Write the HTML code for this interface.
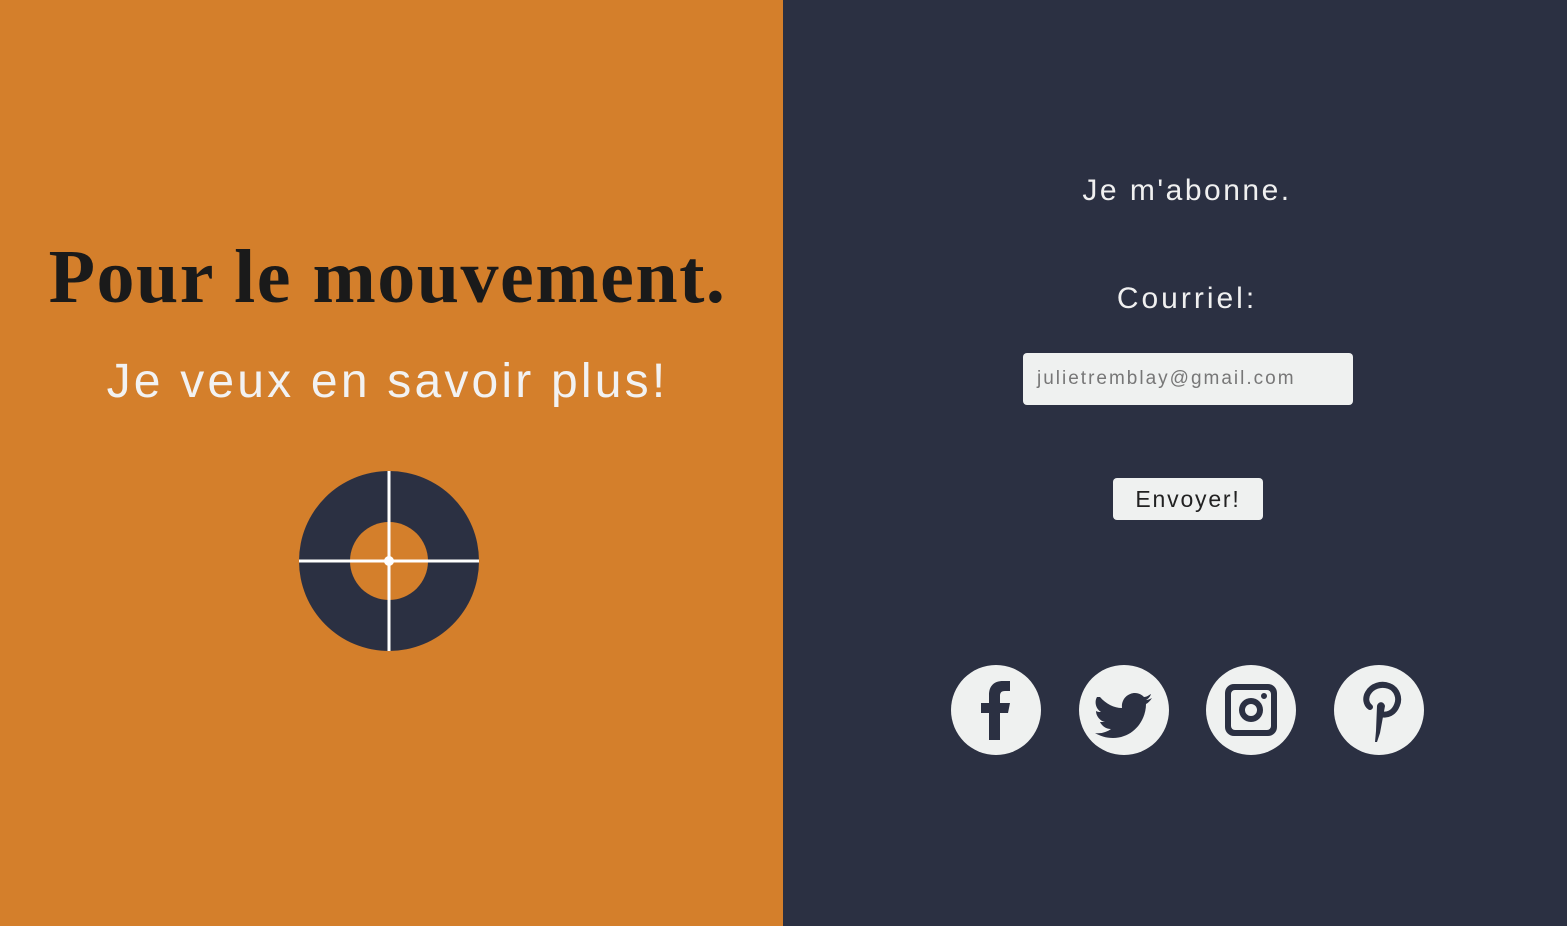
<!DOCTYPE html>
<html><head><style>
body{margin:0;width:1567px;height:926px;overflow:hidden;font-family:"Liberation Sans",sans-serif;}
.l{position:absolute;left:0;top:0;width:783px;height:926px;background:#d47f2b;}
.r{position:absolute;left:783px;top:0;width:784px;height:926px;background:#2b3042;color:#f0f0f0;}
.t{position:absolute;left:0;width:783px;text-align:center;}
.rt{position:absolute;left:12px;width:784px;text-align:center;}
</style></head><body>
<div class="l">
<div class="t" style="top:234px;left:-4px;font-family:'Liberation Serif',serif;font-weight:bold;font-size:76px;color:#1a1a1a;letter-spacing:1.5px;">Pour le mouvement.</div>
<div class="t" style="top:354px;left:-4px;font-size:48px;color:#f2f2f2;letter-spacing:3.2px;">Je veux en savoir plus!</div>
<svg style="position:absolute;left:0;top:0" width="783" height="926">
<circle cx="389" cy="561" r="90" fill="#2b3042"/>
<circle cx="389" cy="561" r="39" fill="#d47f2b"/>
<line x1="389" y1="471" x2="389" y2="651" stroke="#fff" stroke-width="3"/>
<line x1="299" y1="561" x2="479" y2="561" stroke="#fff" stroke-width="3"/>
<circle cx="389" cy="561" r="5" fill="#fff"/>
</svg>
</div>
<div class="r">
<div class="rt" style="top:174px;font-size:30px;letter-spacing:2.5px;">Je m'abonne.</div>
<div class="rt" style="top:282px;font-size:30px;letter-spacing:3px;">Courriel:</div>
<div style="position:absolute;left:240px;top:353px;width:330px;height:52px;background:#eff1f0;border-radius:4px;"><span style="position:absolute;left:14px;top:15px;font-size:19px;color:#777;letter-spacing:2px;">julietremblay@gmail.com</span></div>
<div style="position:absolute;left:330px;top:478px;width:150px;height:42px;background:#eff1f0;border-radius:4px;color:#222;font-size:23px;text-align:center;line-height:42px;letter-spacing:1.8px;">Envoyer!</div>
<svg style="position:absolute;left:0;top:0" width="784" height="926">
<g fill="#eff1f0"><circle cx="213" cy="710" r="45"/><circle cx="341" cy="710" r="45"/><circle cx="468" cy="710" r="45"/><circle cx="596" cy="710" r="45"/></g>
<g fill="#2b3042">
<path d="M206 740V713h-8v-10h8v-8c0-9 5-14 14-14h7v10h-5c-4 0-5 2-5 5v7h10l-2 10h-8v27z"/>
<path d="M317 697c6 7 14 11 22 11-1-9 6-15 13-15 4 0 7 2 9 4 3 0 5-2 7-3-1 3-3 5-5 6 2 0 4-1 6-2-2 3-4 5-6 6 0 17-13 34-33 34-7 0-13-2-18-5 6 1 12-1 16-4-5 0-9-3-11-7h5c-5-1-9-6-9-11 2 1 3 1 5 1-5-3-7-10-4-15z"/>
<path fill-rule="evenodd" d="M451 684h34a9 9 0 0 1 9 9v34a9 9 0 0 1-9 9h-34a9 9 0 0 1-9-9v-34a9 9 0 0 1 9-9zm1 6a4 4 0 0 0-4 4v32a4 4 0 0 0 4 4h32a4 4 0 0 0 4-4v-32a4 4 0 0 0-4-4zm16 8a12 12 0 1 1 0 24a12 12 0 1 1 0-24zm0 6a6 6 0 1 0 0 12a6 6 0 1 0 0-12zm13-11a3 3 0 1 1 0 6a3 3 0 1 1 0-6z"/>
<path fill="none" stroke="#2b3042" stroke-width="6" stroke-linecap="round" d="M587 707c-4-3-5-9-2-14 4-7 13-10 21-7 8 3 11 12 8 19-3 8-10 11-16 9"/>
<path d="M594 706c1-5 7-5 8 0l-5 27-3 9h-2l1-11z"/>
</g>
</svg>
</div>
</body></html>
